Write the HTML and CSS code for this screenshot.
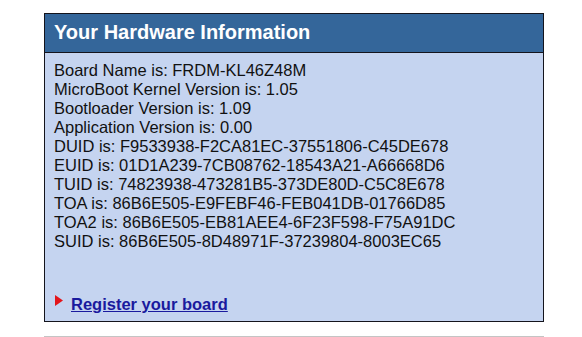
FILE: index.html
```html
<html>
  <head>
    <link rel="stylesheet" href="styles.css">
    <title>Your Hardware Information</title>
  </head>
  <body>
    <div id="page">
      <div class="hw_box">
        <div class="hw_title">Your Hardware Information</div>
        <div class="hw_body">
          <div class="hw_info">
            Board Name is: FRDM-KL46Z48M<br>
            MicroBoot Kernel Version is: 1.05<br>
            Bootloader Version is: 1.09<br>
            Application Version is: 0.00<br>
            DUID is: F9533938-F2CA81EC-37551806-C45DE678<br>
            EUID is: 01D1A239-7CB08762-18543A21-A66668D6<br>
            TUID is: 74823938-473281B5-373DE80D-C5C8E678<br>
            TOA is: 86B6E505-E9FEBF46-FEB041DB-01766D85<br>
            TOA2 is: 86B6E505-EB81AEE4-6F23F598-F75A91DC<br>
            SUID is: 86B6E505-8D48971F-37239804-8003EC65
          </div>
          <div class="hw_register">
            <svg class="arrow" width="8" height="11" viewBox="0 0 8 11"><polygon points="0,0 8,5.5 0,11" fill="#e3151b"/></svg><a href="#">Register your board</a>
          </div>
        </div>
      </div>
      <div class="rule"></div>
    </div>
  </body>
</html>
```
FILE: styles.css
```css
html, body {
  margin:      0;
  color:       #111111;
  background:  #FFFFFF;
  font-family: "Liberation Sans", Arial, sans-serif;
}
div#page {
  padding: 13px 0 0 44px;
  width:   500px;
}
div.hw_box {
  border:     1px solid #14141c;
  background: #c5d4f0;
}
div.hw_title {
  background:    #34669a;
  color:         #FFFFFF;
  font-weight:   bold;
  font-size:     20px;
  line-height:   24px;
  padding:       6px 9px 8px 9px;
  border-bottom: 1px solid #14141c;
}
div.hw_body {
  padding:     8px 9px 7px 9px;
  font-size:   16.5px;
  line-height: 19px;
}
div.hw_register {
  margin-top: 44px;
}
svg.arrow {
  margin:         0 8px 0 1px;
  vertical-align: 4px;
}
div.hw_register a {
  font-weight: bold;
}
a:link    { color: #1a1a9e; }
a:visited { color: #1a1a9e; }
div.rule {
  margin-top: 14px;
  border-top: 1px solid #c4c4c4;
}
```
